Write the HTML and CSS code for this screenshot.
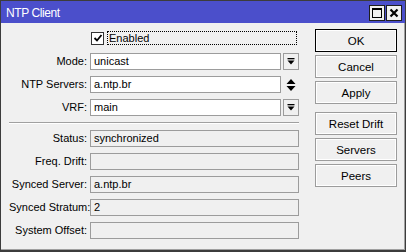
FILE: index.html
```html
<!DOCTYPE html>
<html lang="en">
<head>
    <meta charset="UTF-8">
    <title>NTP Client</title>
    <link rel="stylesheet" href="styles.css">
</head>
<body>
    <div class="window">
        <div class="titlebar">
            <span class="title">NTP Client</span>
            <div class="title-buttons">
                <span class="tbtn">
                    <svg width="12" height="12" viewBox="0 0 12 12"><rect x="1.5" y="1.5" width="9" height="9" fill="none" stroke="#000"/><rect x="1" y="1" width="10" height="2" fill="#000"/></svg>
                </span>
                <span class="tbtn">
                    <svg width="12" height="12" viewBox="0 0 12 12"><path d="M2.5 2.5 L9.5 9.5 M9.5 2.5 L2.5 9.5" stroke="#000" stroke-width="2.2"/></svg>
                </span>
            </div>
        </div>

        <div class="content">
            <div class="form">
                <div class="check-row">
                    <span class="checkbox">
                        <svg width="10" height="10" viewBox="0 0 10 10"><path d="M1.5 5 L4 7.5 L8.5 2" fill="none" stroke="#000" stroke-width="1.8"/></svg>
                    </span>
                    <span class="focus">Enabled</span>
                </div>

                <div class="grid">
                    <label>Mode:</label>
                    <div class="combo">
                        <div class="field">unicast</div>
                        <span class="drop">
                            <svg width="8" height="8" viewBox="0 0 8 8"><rect x="0.5" y="0" width="7" height="1.3" fill="#000"/><path d="M0.5 2.5 H7.5 L4 6.5 Z" fill="#000"/></svg>
                        </span>
                    </div>

                    <label>NTP Servers:</label>
                    <div class="combo">
                        <div class="field">a.ntp.br</div>
                        <span class="updown">
                            <svg width="10" height="14" viewBox="0 0 10 14"><path d="M0.5 6 L5 1 L9.5 6 Z M0.5 8 H9.5 L5 13 Z" fill="#000"/></svg>
                        </span>
                    </div>

                    <label>VRF:</label>
                    <div class="combo">
                        <div class="field">main</div>
                        <span class="drop">
                            <svg width="8" height="8" viewBox="0 0 8 8"><rect x="0.5" y="0" width="7" height="1.3" fill="#000"/><path d="M0.5 2.5 H7.5 L4 6.5 Z" fill="#000"/></svg>
                        </span>
                    </div>
                </div>

                <div class="separator"></div>

                <div class="grid">
                    <label>Status:</label>
                    <div class="field readonly">synchronized</div>

                    <label>Freq. Drift:</label>
                    <div class="field readonly"></div>

                    <label>Synced Server:</label>
                    <div class="field readonly">a.ntp.br</div>

                    <label>Synced Stratum:</label>
                    <div class="field readonly">2</div>

                    <label>System Offset:</label>
                    <div class="field readonly"></div>
                </div>
            </div>

            <div class="actions">
                <button class="default">OK</button>
                <button>Cancel</button>
                <button>Apply</button>
                <button class="spaced">Reset Drift</button>
                <button>Servers</button>
                <button>Peers</button>
            </div>
        </div>
    </div>
</body>
</html>
```

FILE: styles.css
```css
body {
    margin: 0;
    padding: 0;
    font-family: "Liberation Sans", Arial, sans-serif;
    font-size: 11px;
    color: #000;
    background: #f0f0f0;
}

.window {
    width: 406px;
    height: 252px;
    box-sizing: border-box;
    border: 1px solid #3c3c3c;
    border-bottom-width: 2px;
    background: #f0f0f0;
    display: flex;
    flex-direction: column;
}

.titlebar {
    height: 22px;
    background: #4b4fcb;
    display: flex;
    align-items: center;
    justify-content: space-between;
    padding: 0 3px 0 5px;
}

.title {
    color: #fff;
    font-size: 12px;
    letter-spacing: -0.4px;
    padding-top: 1px;
}

.title-buttons {
    display: flex;
    gap: 1px;
    padding-top: 2px;
}

.tbtn {
    width: 14px;
    height: 14px;
    border: 1px solid #1e1e1e;
    background: #f0f0f0;
    display: flex;
    align-items: center;
    justify-content: center;
}

.content {
    flex: 1;
    display: flex;
    border-right: 1px solid #a0a0a0;
    border-bottom: 1px solid #a0a0a0;
}

.form {
    width: 290px;
    padding: 8px 0 0 8px;
}

.check-row {
    display: flex;
    align-items: center;
    height: 14px;
    margin: 0 0 8px 82px;
}

.checkbox {
    width: 11px;
    height: 11px;
    border: 1px solid #333;
    background: #fff;
    display: flex;
    align-items: center;
    justify-content: center;
    margin-right: 3px;
}

.focus {
    flex: 1;
    height: 12px;
    line-height: 12px;
    border: 1px dotted #000;
    padding-left: 1px;
    margin-right: 2px;
}

.grid {
    display: grid;
    grid-template-columns: 78px 1fr;
    column-gap: 3px;
    row-gap: 6px;
}

.grid label {
    text-align: right;
    line-height: 17px;
    white-space: nowrap;
}

.combo {
    display: flex;
    gap: 2px;
}

.field {
    flex: 1;
    height: 17px;
    box-sizing: border-box;
    border: 1px solid #9c9c9c;
    background: #fff;
    padding-left: 3px;
    line-height: 15px;
    white-space: nowrap;
}

.field.readonly {
    background: #f0f0f0;
}

.drop,
.updown {
    width: 16px;
    height: 17px;
    box-sizing: border-box;
    display: flex;
    align-items: center;
    justify-content: center;
}

.drop {
    border: 1px solid #9c9c9c;
}

.separator {
    height: 1px;
    background: #a0a0a0;
    border-bottom: 1px solid #fff;
    margin: 6px 0 6px 0;
}

.actions {
    margin-left: 16px;
    padding-top: 6px;
    width: 82px;
    display: flex;
    flex-direction: column;
    gap: 3px;
}

button {
    height: 23px;
    font-family: inherit;
    font-size: 11.5px;
    color: #000;
    background: #f0f0f0;
    border: 1px solid #9c9c9c;
    box-shadow: inset 0 0 0 1px #fff;
    padding: 0;
}

button.default {
    border-color: #000;
}

button.spaced {
    margin-top: 5px;
}
```
